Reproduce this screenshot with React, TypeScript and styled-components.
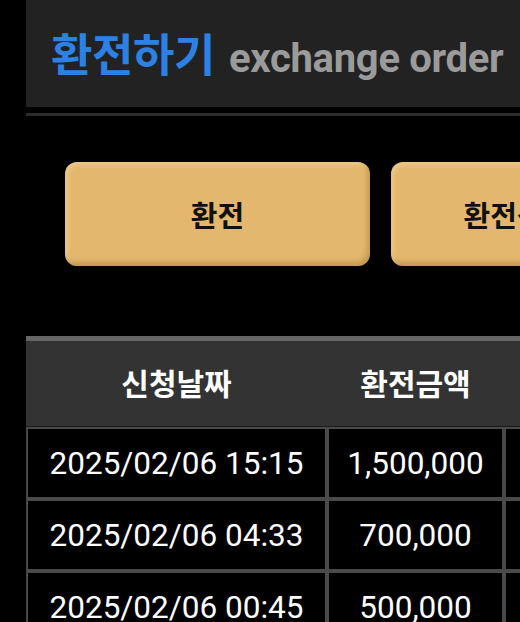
import styled, { createGlobalStyle } from 'styled-components';

const GlobalStyle = createGlobalStyle`
  html, body {
    margin: 0;
    padding: 0;
    background: #000;
    overflow: hidden;
  }
  body {
    font-family: Roboto, "Noto Sans CJK KR", sans-serif;
    color: #fff;
  }
`;

type Order = {
  date: string;
  amount: string;
  status: string;
};

const orders: Order[] = [
  { date: '2025/02/06 15:15', amount: '1,500,000', status: '완료' },
  { date: '2025/02/06 04:33', amount: '700,000', status: '완료' },
  { date: '2025/02/06 00:45', amount: '500,000', status: '완료' },
];

const Page = styled.div`
  width: 720px;
  margin-left: 26px;
`;

const TitleBar = styled.header`
  height: 107px;
  background: #222222;
  display: flex;
  align-items: center;
  padding-left: 25px;
  padding-bottom: 2px;
  box-sizing: border-box;
`;

const Title = styled.h1`
  margin: 0;
  font-size: 45px;
  font-weight: 700;
  color: #2b82e4;
  letter-spacing: -0.4px;
`;

const SubTitle = styled.span`
  margin-left: 14px;
  font-size: 40px;
  font-weight: 700;
  color: #9b9b9b;
  letter-spacing: -0.3px;
`;

const Divider = styled.div`
  height: 3px;
  margin-top: 6px;
  background: #2c2c2c;
`;

const ButtonRow = styled.div`
  display: flex;
  gap: 21px;
  padding: 46px 0 0 39px;
`;

const ActionButton = styled.button`
  flex: 0 0 305px;
  height: 104px;
  border: none;
  border-radius: 12px;
  background: #e3b76d;
  box-shadow:
    inset -3px -4px 5px rgba(120, 80, 20, 0.28),
    inset 3px 3px 4px rgba(255, 235, 190, 0.35);
  font-family: Roboto, "Noto Sans CJK KR", sans-serif;
  font-size: 29px;
  font-weight: 700;
  color: #111;
  cursor: pointer;
`;

const OrderTable = styled.table`
  margin-top: 70px;
  width: 700px;
  table-layout: fixed;
  border-collapse: separate;
  border-spacing: 0;
  border-top: 5px solid #666666;
`;

const HeadCell = styled.th`
  height: 81px;
  padding: 0 0 4px;
  background: #333333;
  border-bottom: 1px solid #1a1a1a;
  font-size: 30px;
  font-weight: 700;
  color: #fff;
  text-align: center;
`;

const Cell = styled.td`
  height: 68px;
  padding: 0;
  border: 2px solid #4a4a4a;
  font-size: 31.5px;
  font-weight: 400;
  color: #fff;
  text-align: center;
  white-space: nowrap;
`;

export default function App() {
  return (
    <>
      <GlobalStyle />
      <Page>
        <TitleBar>
          <Title>
            환전하기<SubTitle>exchange order</SubTitle>
          </Title>
        </TitleBar>
        <Divider />

        <ButtonRow>
          <ActionButton>환전</ActionButton>
          <ActionButton>환전신청내역</ActionButton>
        </ButtonRow>

        <OrderTable>
          <colgroup>
            <col style={{ width: 301 }} />
            <col style={{ width: 177 }} />
            <col />
          </colgroup>
          <thead>
            <tr>
              <HeadCell>신청날짜</HeadCell>
              <HeadCell>환전금액</HeadCell>
              <HeadCell>상태</HeadCell>
            </tr>
          </thead>
          <tbody>
            {orders.map((o) => (
              <tr key={o.date}>
                <Cell>{o.date}</Cell>
                <Cell>{o.amount}</Cell>
                <Cell>{o.status}</Cell>
              </tr>
            ))}
          </tbody>
        </OrderTable>
      </Page>
    </>
  );
}
